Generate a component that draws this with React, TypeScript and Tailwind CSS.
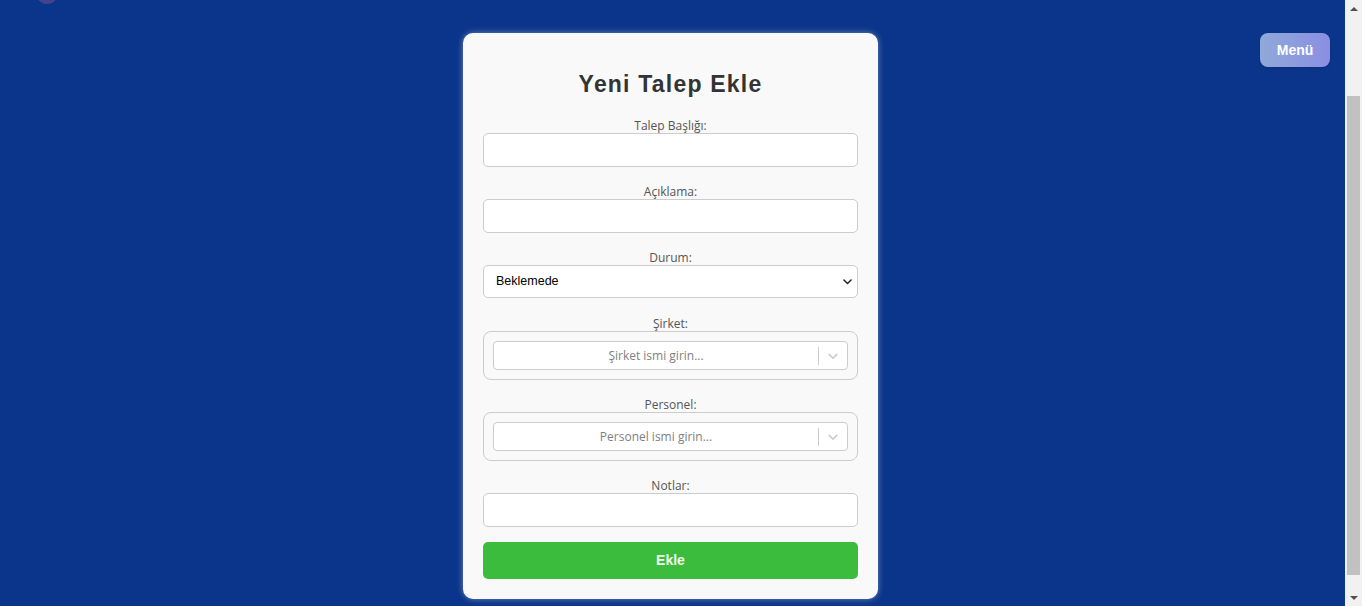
const label = 'block text-center text-[12px] leading-[15px] text-[#555] font-["Open_Sans",sans-serif]'
const input = 'block h-[34px] w-full rounded-[5px] border border-[#ccc] bg-white px-3 text-[13px] outline-none'

function Chevron({ className }: { className: string }) {
  return (
    <svg viewBox="0 0 20 20" className={className} fill="currentColor">
      <path d="M4.5 7.2c.4-.4 1-.4 1.4 0L10 11.2l4.1-4c.4-.4 1-.4 1.4 0 .4.4.4 1 0 1.4l-4.8 4.7c-.4.4-1 .4-1.4 0L4.5 8.6c-.4-.4-.4-1 0-1.4z" />
    </svg>
  )
}

function SearchSelect({ placeholder }: { placeholder: string }) {
  return (
    <div className="rounded-[8px] border border-[#ccc] p-[9px]">
      <div className="flex h-[29px] items-center rounded-[4px] border border-[#ccc] bg-white">
        <div className="flex-1 text-center text-[12px] text-[#808080] font-['Open_Sans',sans-serif]">
          {placeholder}
        </div>
        <span className="h-[18px] w-px bg-[#ccc]" />
        <div className="flex w-[28px] justify-center">
          <Chevron className="h-[16px] w-[16px] text-[#ccc]" />
        </div>
      </div>
    </div>
  )
}

// fake browser scrollbar, page is shown scrolled a bit
function Scrollbar() {
  return (
    <div className="flex w-[17px] flex-col items-center bg-[#f1f1f1]">
      <div className="flex h-[17px] items-center justify-center">
        <span className="h-0 w-0 border-x-[4px] border-b-[4px] border-x-transparent border-b-[#505050]" />
      </div>
      <div className="mt-[79px] h-[479px] w-[13px] bg-[#c1c1c1]" />
      <div className="flex-1" />
      <div className="flex h-[17px] items-center justify-center">
        <span className="h-0 w-0 border-x-[4px] border-t-[4px] border-x-transparent border-t-[#505050]" />
      </div>
    </div>
  )
}

export default function App() {
  return (
    <div className="flex h-screen overflow-hidden bg-[#0b358a] font-['Liberation_Sans',Arial,sans-serif]">
      <div className="relative flex flex-1 flex-col">
        <div className="flex h-[33px] items-start px-[36px]">
          <span className="-mt-[18px] h-[22px] w-[22px] rounded-full bg-gradient-to-br from-[#4a6fd0] to-[#b04a6a] opacity-40" />
        </div>

        <button className="absolute right-[15px] top-[33px] h-[34px] w-[70px] rounded-[8px] bg-gradient-to-r from-[#8fa9d9] to-[#8b8ee2] text-[14px] font-bold text-white shadow">
          Menü
        </button>

        <div className="flex justify-center pr-[4px]">
          <form className="w-[415px] rounded-[10px] bg-[#f9f9f9] px-5 pb-5 pt-5 shadow-[0_0_6px_rgba(255,255,255,0.4)]">
            <h2 className="mt-[17px] mb-[20px] text-center text-[23px] font-bold leading-[28px] tracking-[1.2px] text-[#333]">
              Yeni Talep Ekle
            </h2>

            <label className={label}>Talep Başlığı:</label>
            <input className={input} />

            <label className={`${label} mt-[17px]`}>Açıklama:</label>
            <input className={input} />

            <label className={`${label} mt-[17px]`}>Durum:</label>
            <div className="relative">
              <select className="block h-[33px] w-full appearance-none rounded-[5px] border border-[#ccc] bg-white px-3 text-[12.5px] text-black outline-none">
                <option>Beklemede</option>
              </select>
              <Chevron className="pointer-events-none absolute right-[3px] top-[9px] h-[15px] w-[15px] text-[#222]" />
            </div>

            <label className={`${label} mt-[18px]`}>Şirket:</label>
            <SearchSelect placeholder="Şirket ismi girin..." />

            <label className={`${label} mt-[17px]`}>Personel:</label>
            <SearchSelect placeholder="Personel ismi girin..." />

            <label className={`${label} mt-[17px]`}>Notlar:</label>
            <input className={input} />

            <button
              type="button"
              className="mt-[15px] block h-[37px] w-full rounded-[5px] bg-[#3cbc3c] text-[14px] font-bold text-[#eefaee]"
            >
              Ekle
            </button>
          </form>
        </div>
      </div>
      <Scrollbar />
    </div>
  )
}
